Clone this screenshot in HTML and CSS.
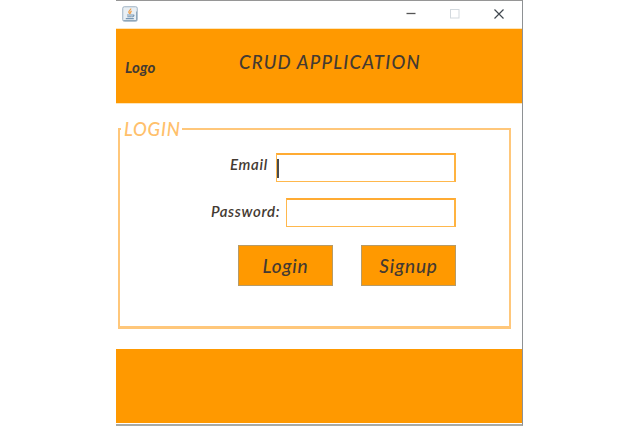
FILE: index.html
```html
<!DOCTYPE html>
<html lang="en">
<head>
<meta charset="utf-8">
<title>CRUD Application</title>
<link rel="stylesheet" href="styles.css">
</head>
<body>
<div class="window">
  <div class="titlebar">
    <svg class="java" width="16" height="16" viewBox="0 0 16 16">
      <rect x=".75" y=".75" width="14.5" height="14.5" rx="1.5" fill="#e9eff4" stroke="#9eb2c3"/>
      <path d="M1.5 14.5h13v-9" fill="none" stroke="#8fa7ba"/>
      <path d="M8.7 2.5c.5 1.6-2.6 2.3-1.8 4 .3.7 1 1 .9 1.7M9.8 5c-1.5.7-1.6 1.5-.9 2.4" fill="none" stroke="#f0a04b" stroke-width="1.3"/>
      <path d="M5 9h5.500M5.300 10.700h4.500M3.800 12.600h8M10.500 9c2.200-.4 1.700 1.600-.3 1.900" fill="none" stroke="#7797b3" stroke-width="1.100"/>
    </svg>
    <div class="controls">
      <svg width="10" height="10" viewBox="0 0 10 10"><path d="M.5 4.500h9" stroke="#555" stroke-width="1.300"/></svg>
      <svg width="10" height="10" viewBox="0 0 10 10"><rect x=".5" y=".5" width="8.500" height="8.500" fill="none" stroke="#d3d9de"/></svg>
      <svg width="10" height="10" viewBox="0 0 10 10"><path d="M.5.5l9 9M9.500.5l-9 9" stroke="#40474e" stroke-width="1.200"/></svg>
    </div>
  </div>
  <header class="header">
    <span class="logo">Logo</span>
    <h1 class="heading">CRUD APPLICATION</h1>
  </header>
  <main class="content">
    <fieldset class="group">
      <legend class="legend">LOGIN</legend>
      <div class="row">
        <label class="label label-email" for="email">Email</label>
        <div class="field field-email" id="email"><span class="caret"></span></div>
      </div>
      <div class="row">
        <label class="label label-password" for="password">Password:</label>
        <div class="field field-password" id="password"></div>
      </div>
      <div class="actions">
        <button class="button login">Login</button>
        <button class="button signup">Signup</button>
      </div>
    </fieldset>
  </main>
  <footer class="footer"></footer>
</div>
</body>
</html>
```
FILE: styles.css
```css
* { box-sizing: border-box; }

body {
  margin: 0;
  background: #fff;
  font-family: Lato, "Open Sans", sans-serif;
  font-style: italic;
  color: #443a32;
}

.window {
  width: 407px;
  height: 426px;
  margin-left: 116px;
  display: flex;
  flex-direction: column;
  border-top: 1px solid #969696;
  border-right: 1px solid #8e9194;
  border-bottom: 2px solid #a9aaa6;
}

.titlebar {
  height: 28px;
  flex: none;
  display: flex;
  align-items: center;
  justify-content: space-between;
  padding: 0 18px 1px 6px;
  border-bottom: 1px solid #ffe5b8;
}

.java, .controls svg { display: block; }

.controls { display: flex; gap: 34px; }

.header {
  height: 74px;
  flex: none;
  display: flex;
  align-items: flex-start;
  background: #ff9900;
}

.logo {
  width: 123px;
  padding: 29px 0 0 9px;
  font-size: 15px;
  line-height: 18px;
  font-weight: 700;
  letter-spacing: .2px;
}

.heading {
  margin: 22px 0 0;
  font-size: 18.5px;
  line-height: 22px;
  font-weight: 500;
  letter-spacing: 1.2px;
  white-space: nowrap;
}

.content {
  height: 246px;
  flex: none;
  padding: 15px 11px 0 2px;
  border-top: 1px solid #ffe5b8;
}

.group {
  height: 210px;
  min-width: 0;
  margin: 0;
  padding: 14px 0 0;
  border: 2px solid #ffc77a;
  border-bottom-width: 3px;
}

.legend {
  height: 20px;
  margin-left: 1px;
  padding: 0 1px 0 3px;
  font-size: 18.5px;
  line-height: 20px;
  font-weight: 500;
  letter-spacing: .8px;
  color: #ffc06b;
}

.row {
  display: flex;
  justify-content: flex-end;
  margin-right: 53px;
  margin-bottom: 16px;
}

.label {
  font-size: 15px;
  line-height: 24px;
  font-weight: 600;
  letter-spacing: .65px;
}

.label-email { width: 46px; margin-top: -1px; }
.label-password { width: 75px; margin-top: 1px; }

.field {
  height: 29px;
  border: 1px solid #ffb84d;
  border-top: 2px solid #ffab33;
  border-right: 2px solid #ffb340;
  background: #fff;
}

.field-email { width: 180px; padding-top: 4px; }
.field-password { width: 170px; }

.caret {
  display: block;
  width: 2px;
  height: 19px;
  background: #484b4e;
}

.actions {
  display: flex;
  justify-content: flex-end;
  gap: 28px;
  margin: 18px 53px 0 0;
}

.button {
  width: 95px;
  height: 41px;
  padding: 0;
  border: 1px solid #b69b68;
  background: #ff9900;
  font: italic 500 19px/22px Lato, "Open Sans", sans-serif;
  letter-spacing: .8px;
  color: #443a32;
}

.footer {
  height: 74px;
  flex: none;
  background: #ff9900;
}
```
